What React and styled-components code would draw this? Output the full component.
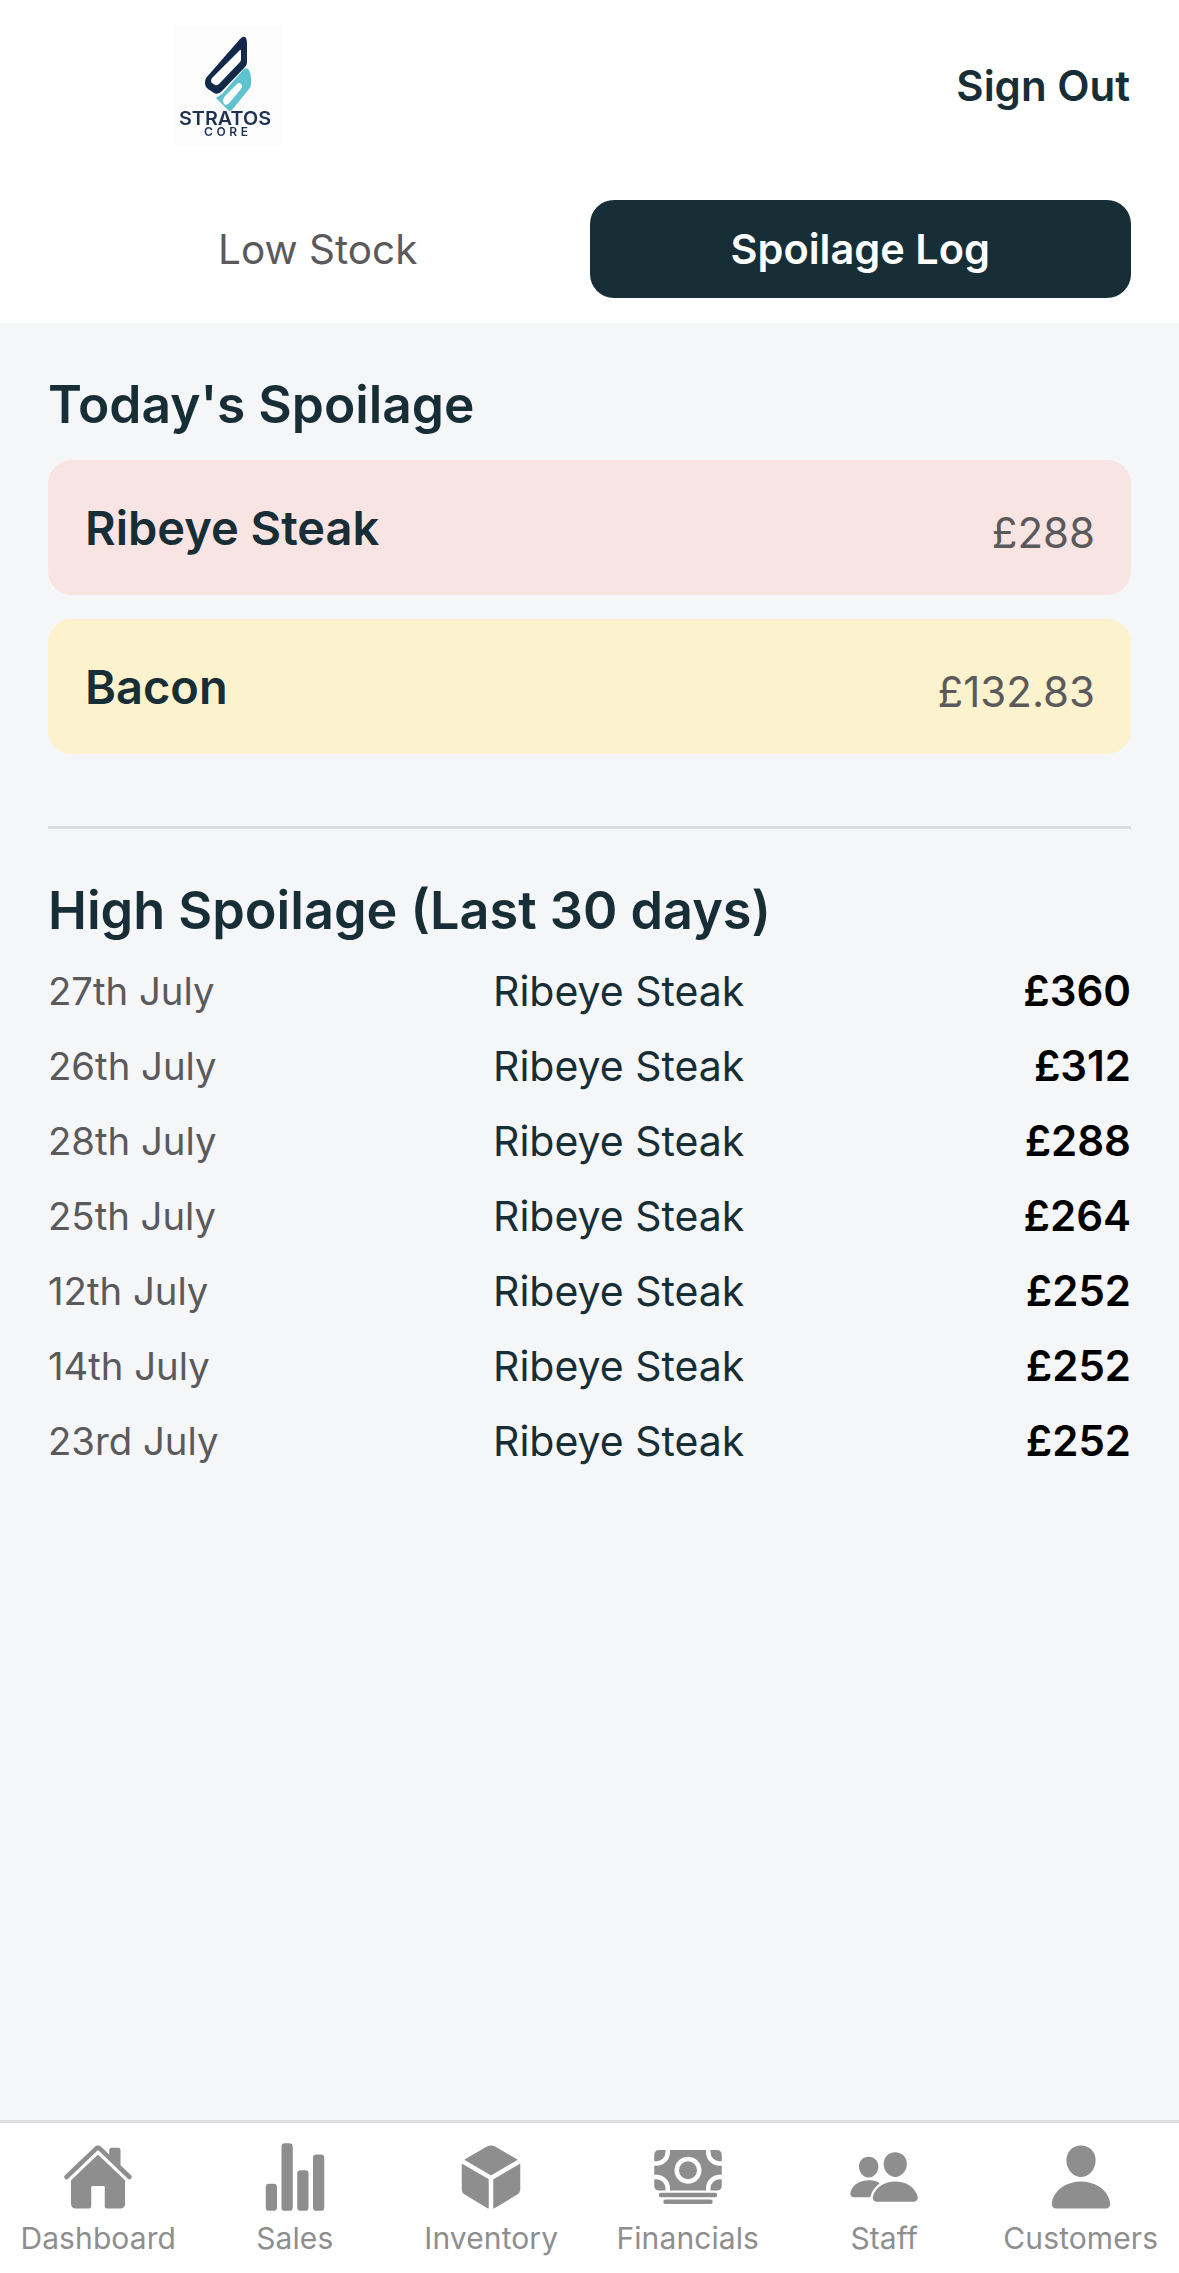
import React from 'react';
import styled, { createGlobalStyle } from 'styled-components';
import { IoHome, IoStatsChart, IoCube, IoCash, IoPeople, IoPerson } from 'react-icons/io5';

const Global = createGlobalStyle`
  html, body { margin: 0; padding: 0; background: #f5f6f8; }
  body { font-family: Inter, "Noto Sans", "Liberation Sans", sans-serif; }
  * { box-sizing: border-box; }
`;

const Page = styled.div`
  width: 1179px;
  height: 2273px;
  display: flex;
  flex-direction: column;
  background: #f5f6f8;
  overflow: hidden;
`;

const TopPanel = styled.header`
  height: 323px;
  background: #ffffff;
  display: flex;
  flex-direction: column;
  padding: 26px 48px 0;
`;

const BrandRow = styled.div`
  height: 120px;
  display: flex;
  align-items: center;
  justify-content: space-between;
  padding-left: 126px;
`;

const LogoMark = styled.svg`
  width: 108px;
  height: 120px;
  display: block;
  background: #fcfcfd;
  filter: blur(0.6px);
`;

const SignOut = styled.button`
  border: 0;
  background: none;
  padding: 0;
  margin-right: 1px;
  font: 600 42px/50px Inter, sans-serif;
  color: #182e36;
`;

const Tabs = styled.nav`
  margin-top: 54px;
  display: grid;
  grid-template-columns: 1fr 1fr;
`;

const Tab = styled.button`
  height: 98px;
  border: 0;
  border-radius: 24px;
  padding: ${p => (p.$active ? '0' : '2px 2px 0 0')};
  font: ${p => (p.$active ? '600 41.5px/50px' : '400 40.5px/50px')} Inter, sans-serif;
  color: ${p => (p.$active ? '#ffffff' : '#5a5a5c')};
  background: ${p => (p.$active ? '#182e36' : 'transparent')};
`;

const Content = styled.main`
  flex: 1;
  padding: 51px 48px 0;
`;

const SectionTitle = styled.h2`
  margin: 0;
  font: 600 51.5px/60px Inter, sans-serif;
  color: #182e36;
`;

const Cards = styled.div`
  margin-top: 26px;
  display: flex;
  flex-direction: column;
  gap: 24px;
`;

const Card = styled.div`
  height: 135px;
  border-radius: 24px;
  padding: 0 36px 0 37px;
  display: flex;
  align-items: center;
  justify-content: space-between;
  background: ${p => (p.$tone === 'red' ? '#f9e4e4' : '#fcf2cd')};
`;

const CardName = styled.span`
  font: 600 47px/54px Inter, sans-serif;
  color: #182e36;
`;

const CardValue = styled.span`
  font: 400 42px/50px Inter, sans-serif;
  color: #5a5a5c;
  padding-top: 11px;
`;

const Divider = styled.hr`
  margin: 72px 0 0;
  border: 0;
  height: 3px;
  background: #dcdde0;
`;

const SecondTitle = styled(SectionTitle)`
  margin-top: 51px;
  font-size: 52.2px;
`;

const List = styled.div`
  margin-top: 13px;
  display: flex;
  flex-direction: column;
`;

const Row = styled.div`
  height: 75px;
  display: grid;
  grid-template-columns: 445px 1fr auto;
  align-items: center;
`;

const DateCell = styled.span`
  font: 400 38.3px/48px Inter, sans-serif;
  color: #5a5a5c;
`;

const ItemCell = styled.span`
  font: 400 41px/50px Inter, sans-serif;
  color: #182e36;
`;

const ValueCell = styled.span`
  font: 600 42px/50px Inter, sans-serif;
  color: #000;
`;

const BottomNav = styled.nav`
  height: 153px;
  background: #fff;
  border-top: 3px solid #dcdde0;
  display: grid;
  grid-template-columns: repeat(6, 1fr);
`;

const NavItem = styled.a`
  display: flex;
  flex-direction: column;
  align-items: center;
  padding-top: 18px;
  color: #8e8e8f;
  font: 400 30px/36px Inter, sans-serif;
  letter-spacing: 0.1px;
  svg { display: block; }
  span { margin-top: 7px; }
`;

const rows = [
  ['27th July', '£360'],
  ['26th July', '£312'],
  ['28th July', '£288'],
  ['25th July', '£264'],
  ['12th July', '£252'],
  ['14th July', '£252'],
  ['23rd July', '£252'],
];

const nav = [
  ['Dashboard', IoHome],
  ['Sales', IoStatsChart],
  ['Inventory', IoCube],
  ['Financials', IoCash],
  ['Staff', IoPeople],
  ['Customers', IoPerson],
];

const Logo = () => (
  <LogoMark viewBox="0 0 108 120">
    <path
      fillRule="evenodd"
      fill="#5fc2cf"
      d="M70 43 Q73 41 75 44 Q77 48 77 52 L77 58 Q77 61 75 63 L58 84 Q56 86 54 84 L42 72 L48 68 Z
         M63 58 L51 70 Q48 74 49 76 L51 79 Q54 79 57 75 L67 63 Q69 60 67 58 Q65 56 63 58 Z"
    />
    <path
      fillRule="evenodd"
      fill="#12294a"
      d="M66 13 Q70 9 72 12 Q73 14 73 17 L73 36 Q73 39 71 41 L48 65 Q44 69 40 67 L34 63 Q29 59 32 52 Z
         M66 24 L38 52 Q36 55 38 57 L41 59 Q43 60 45 58 L66 36 Q67 35 67 33 L67 26 Q67 23 66 24 Z"
    />
    <text x="51" y="99" textAnchor="middle" textLength="92" lengthAdjust="spacingAndGlyphs" fontFamily="Inter, sans-serif" fontWeight="600" fontSize="19" fill="#1e3352">STRATOS</text>
    <text x="52" y="110" textAnchor="middle" textLength="44" lengthAdjust="spacing" fontFamily="Inter, sans-serif" fontWeight="600" fontSize="12" fill="#1e3352">CORE</text>
  </LogoMark>
);

export default function App() {
  return (
    <Page>
      <Global />
      <TopPanel>
        <BrandRow>
          <Logo />
          <SignOut>Sign Out</SignOut>
        </BrandRow>
        <Tabs>
          <Tab>Low Stock</Tab>
          <Tab $active>Spoilage Log</Tab>
        </Tabs>
      </TopPanel>
      <Content>
        <SectionTitle>Today's Spoilage</SectionTitle>
        <Cards>
          <Card $tone="red"><CardName>Ribeye Steak</CardName><CardValue>£288</CardValue></Card>
          <Card $tone="yellow"><CardName>Bacon</CardName><CardValue>£132.83</CardValue></Card>
        </Cards>
        <Divider />
        <SecondTitle>High Spoilage (Last 30 days)</SecondTitle>
        <List>
          {rows.map(([d, v]) => (
            <Row key={d}><DateCell>{d}</DateCell><ItemCell>Ribeye Steak</ItemCell><ValueCell>{v}</ValueCell></Row>
          ))}
        </List>
      </Content>
      <BottomNav>
        {nav.map(([label, Icon]) => (
          <NavItem key={label}><Icon size={72} /><span>{label}</span></NavItem>
        ))}
      </BottomNav>
    </Page>
  );
}
